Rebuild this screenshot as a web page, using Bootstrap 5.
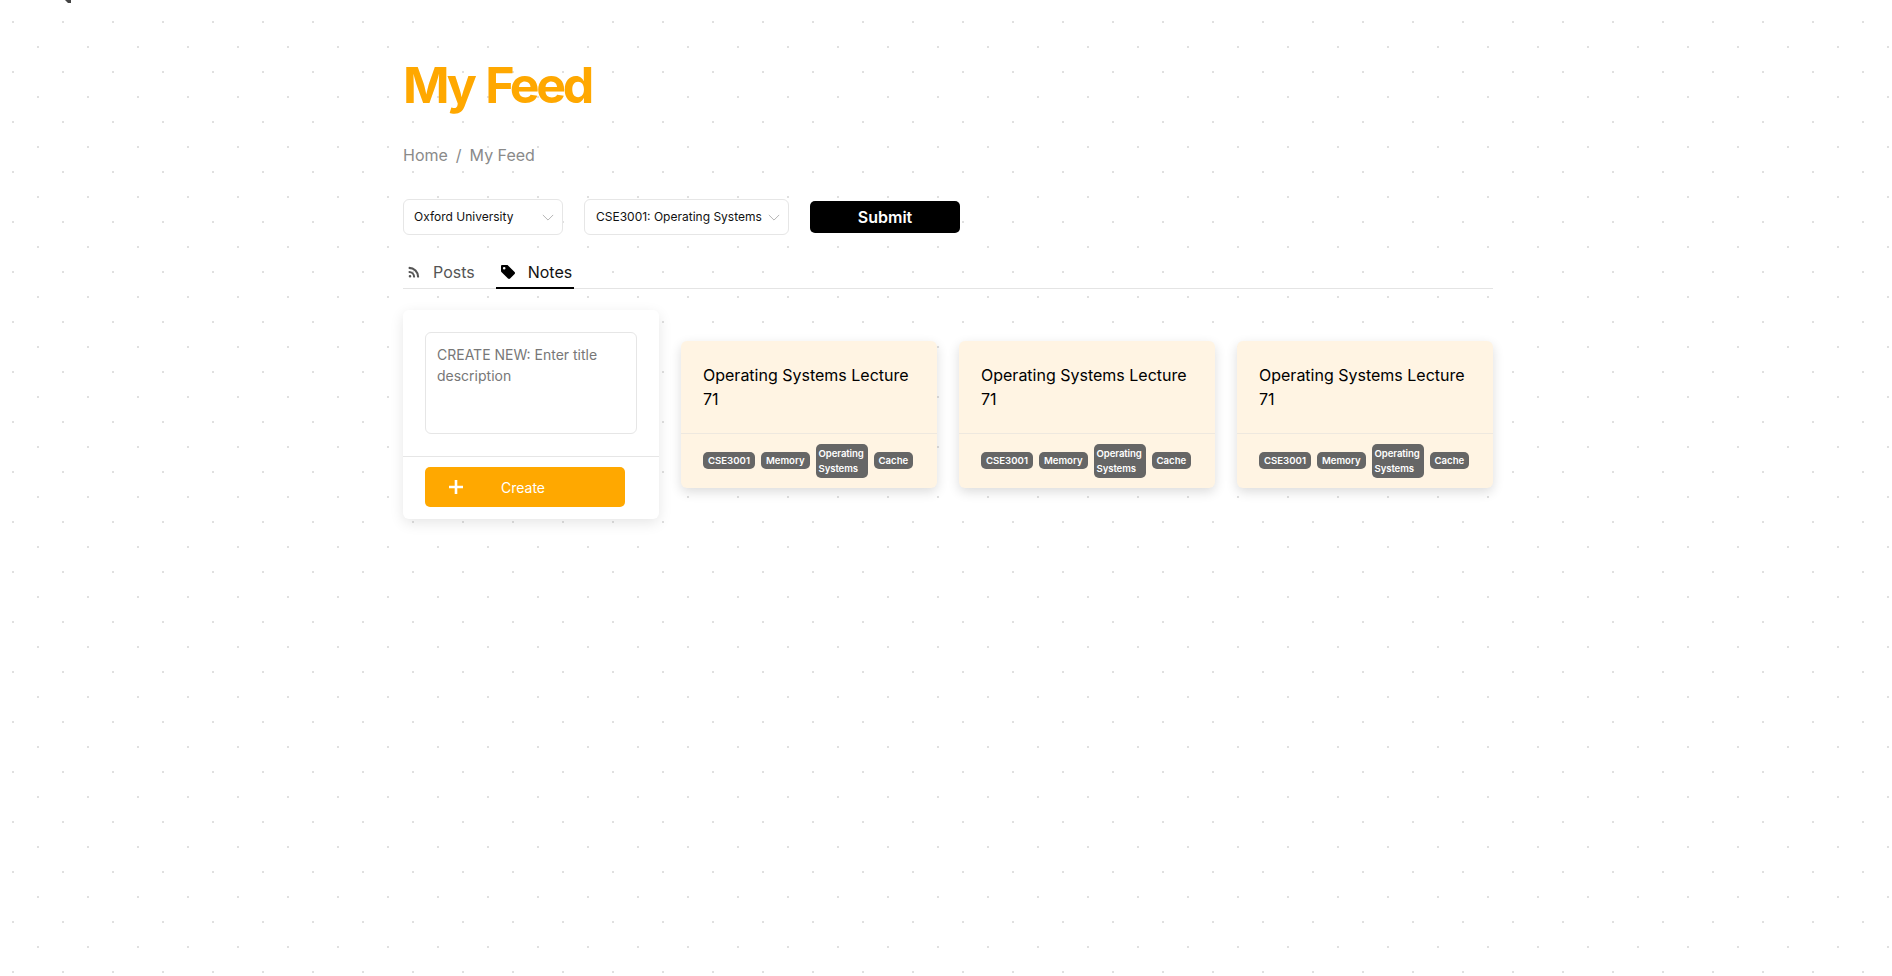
<!DOCTYPE html>
<html lang="en">
<head>
  <meta charset="UTF-8" />
  <meta name="viewport" content="width=device-width, initial-scale=1.0" />
  <title>My Feed</title>
  <link href="https://cdn.jsdelivr.net/npm/bootstrap@5.3.2/dist/css/bootstrap.min.css" rel="stylesheet" />
  <style>
    body {
      font-family: Inter, "Liberation Sans", sans-serif;
      background-color: #fff;
      background-image: radial-gradient(circle, #e0e0e0 1px, transparent 1.2px), radial-gradient(circle, #e0e0e0 1px, transparent 1.2px);
      background-size: 50px 50px;
      background-position: -12px -3px, 13px 22px;
      min-height: 976px;
    }
    .feed-page { width: 1090px; margin-left: 403px; padding-top: 54px; }
    .feed-title { color: #ffa800; font-size: 50px; font-weight: 700; letter-spacing: -3.3px; word-spacing: 3px; line-height: 63px; margin-bottom: 26px; }
    .feed-crumbs { font-size: 16px; color: #8a8a8a; line-height: 24px; --bs-breadcrumb-divider-color: #8a8a8a; --bs-breadcrumb-item-active-color: #8a8a8a; --bs-breadcrumb-margin-bottom: 32px; }
    .feed-crumbs a { color: #8a8a8a; text-decoration: none; }
    .feed-select { font-size: 12px; height: 36px; border: 1px solid #e6e6e6; border-radius: 6px; color: #111; padding: 0 22px 0 11px; background-image: url("data:image/svg+xml,%3csvg xmlns='http://www.w3.org/2000/svg' viewBox='0 0 14 8'%3e%3cpath fill='none' stroke='%23aaa' d='M1 1l6 6 6-6'/%3e%3c/svg%3e"); background-position: right 8px center; background-size: 12px 7px; }
    .select-uni { width: 160px; padding-left: 10px; }
    .select-course { width: 205px; margin-left: 21px; }
    .submit-btn { width: 150px; height: 32px; margin-left: 21px; padding: 0; font-size: 16px; font-weight: 600; background: #000; color: #fff; border: 0; border-radius: 5px; }
    .feed-tabs { margin-top: 20px; border-bottom: 1px solid #e4e4e4; height: 34px; }
    .feed-tabs .nav-link { color: #555; font-size: 16px; padding: 2px 2px 0 4px; height: 34px; display: flex; align-items: center; border-bottom: 2px solid transparent; }
    .feed-tabs .nav-link.active { color: #111; border-bottom-color: #000; }
    .feed-tabs svg { margin-right: 13px; }
    .feed-tabs .active svg { margin-right: 12px; }
    .tab-gap { margin-left: 19px; }
    .notes-row { --bs-gutter-x: 22px; margin-top: 21px; }
    .create-card { border: 0; border-radius: 6px; box-shadow: 0 4px 14px rgba(0, 0, 0, .1); }
    .create-top { padding: 22px 22px 22px; border-bottom: 1px solid #e6e6e6; }
    .create-input { height: 102px; resize: none; font-size: 14px; line-height: 21px; padding: 11px 11px; border: 1px solid #e6e6e6; border-radius: 6px; }
    .create-input::placeholder { color: #777; }
    .create-bottom { padding: 10px 22px 12px; }
    .create-btn { width: 200px; height: 40px; background: #ffa800; color: #fff; border: 0; border-radius: 5px; font-size: 14px; padding: 0 0 0 23px; display: flex; align-items: center; }
    .create-btn span { margin-left: 37px; }
    .note-card { border: 0; border-radius: 6px; background: #fff4e3; box-shadow: 0 4px 12px rgba(0, 0, 0, .14); }
    .note-title { font-size: 16px; line-height: 24px; color: #000; padding: 22px; border-bottom: 1px solid #eee8df; font-weight: 400; margin: 0; }
    .note-tags { padding: 0 22px 1px; display: flex; align-items: center; gap: 6px; height: 54px; }
    .note-chip { background: #666; color: #fff; border-radius: 5px; font-size: 9.6px; font-weight: 600; line-height: 15px; padding: 1px 5px; white-space: normal; }
    .note-chip.wide { width: 52px; padding: 2px 3px; letter-spacing: -.1px; flex: 0 0 52px; }
    .stray-mark { position: absolute; left: 64px; top: 0; }
  </style>
</head>
<body>
  <svg class="stray-mark" width="8" height="4" viewBox="0 0 8 4"><path d="M1 0 L4 3 L7 3 L7 0" fill="#444"/></svg>

  <div class="feed-page">
    <h1 class="feed-title">My Feed</h1>

    <nav aria-label="breadcrumb">
      <ol class="breadcrumb feed-crumbs">
        <li class="breadcrumb-item"><a href="#">Home</a></li>
        <li class="breadcrumb-item active" aria-current="page">My Feed</li>
      </ol>
    </nav>

    <form class="d-flex align-items-center">
      <select class="form-select feed-select select-uni"><option>Oxford University</option></select>
      <select class="form-select feed-select select-course"><option>CSE3001: Operating Systems</option></select>
      <button type="button" class="btn submit-btn">Submit</button>
    </form>

    <ul class="nav feed-tabs">
      <li class="nav-item">
        <a class="nav-link" href="#">
          <svg width="13" height="13" viewBox="0 0 16 16" fill="#555"><path d="M2 1.5a.5.5 0 0 1 .5-.5A12.5 12.5 0 0 1 15 13.5a.5.5 0 0 1-.5.5h-1.6a.5.5 0 0 1-.5-.5A9.9 9.9 0 0 0 2.5 3.6.5.5 0 0 1 2 3.1V1.5zm0 5a.5.5 0 0 1 .5-.5A7.5 7.5 0 0 1 10 13.5a.5.5 0 0 1-.5.5H8a.5.5 0 0 1-.5-.5 5 5 0 0 0-5-5 .5.5 0 0 1-.5-.5V6.5zM3.7 11a1.6 1.6 0 1 1 0 3.2 1.6 1.6 0 0 1 0-3.2z"/></svg>
          Posts
        </a>
      </li>
      <li class="nav-item tab-gap">
        <a class="nav-link active" href="#">
          <svg width="16" height="16" viewBox="0 0 16 16" fill="#000"><path d="M1 2.2C1 1.5 1.5 1 2.2 1H7c.4 0 .8.2 1 .4l6.6 6.6c.6.6.6 1.5 0 2.1l-4.5 4.5c-.6.6-1.5.6-2.1 0L1.4 8C1.2 7.8 1 7.4 1 7V2.2zM4.2 5.6a1.3 1.3 0 1 0 0-2.6 1.3 1.3 0 0 0 0 2.6z"/></svg>
          Notes
        </a>
      </li>
    </ul>

    <div class="row notes-row align-items-center">
      <div class="col-3">
        <div class="card create-card">
          <div class="create-top">
            <textarea class="form-control create-input" placeholder="CREATE NEW: Enter title description"></textarea>
          </div>
          <div class="create-bottom">
            <button type="button" class="btn create-btn">
              <svg width="16" height="16" viewBox="0 0 16 16"><path d="M8 1v14M1 8h14" stroke="#fff" stroke-width="2.6"/></svg>
              <span>Create</span>
            </button>
          </div>
        </div>
      </div>
      <div class="col-3">
        <div class="card note-card">
          <h5 class="note-title">Operating Systems Lecture 71</h5>
          <div class="note-tags">
            <span class="note-chip">CSE3001</span><span class="note-chip">Memory</span><span class="note-chip wide">Operating Systems</span><span class="note-chip">Cache</span>
          </div>
        </div>
      </div>
      <div class="col-3">
        <div class="card note-card">
          <h5 class="note-title">Operating Systems Lecture 71</h5>
          <div class="note-tags">
            <span class="note-chip">CSE3001</span><span class="note-chip">Memory</span><span class="note-chip wide">Operating Systems</span><span class="note-chip">Cache</span>
          </div>
        </div>
      </div>
      <div class="col-3">
        <div class="card note-card">
          <h5 class="note-title">Operating Systems Lecture 71</h5>
          <div class="note-tags">
            <span class="note-chip">CSE3001</span><span class="note-chip">Memory</span><span class="note-chip wide">Operating Systems</span><span class="note-chip">Cache</span>
          </div>
        </div>
      </div>
    </div>
  </div>

  <script src="https://cdn.jsdelivr.net/npm/bootstrap@5.3.2/dist/js/bootstrap.bundle.min.js"></script>
</body>
</html>
